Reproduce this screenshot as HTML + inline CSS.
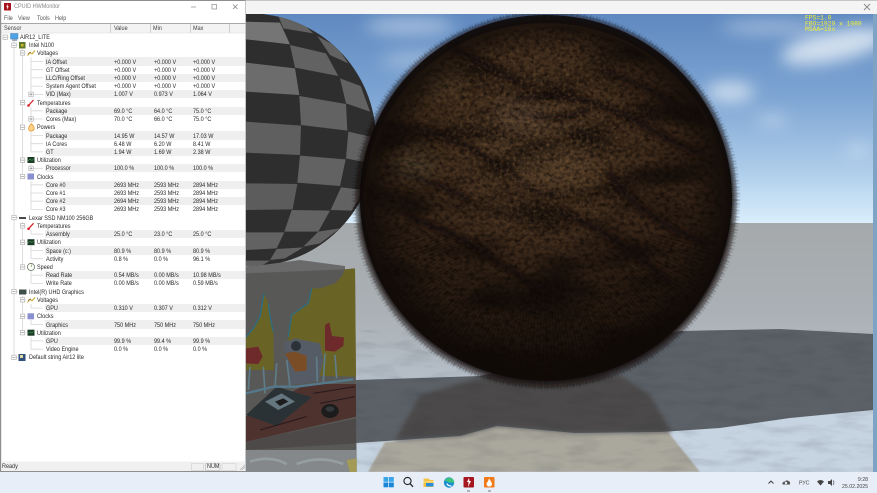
<!DOCTYPE html>
<html><head><meta charset="utf-8"><style>
html,body{margin:0;padding:0;width:877px;height:493px;overflow:hidden;background:#7fa3c4}
body{position:relative;font-family:"Liberation Sans",sans-serif}
svg{position:absolute;left:0;top:0}
#win{position:absolute;left:0;top:0;width:246px;height:472px;background:#fff;filter:blur(.22px);overflow:hidden;color:#2a2a2a;font-size:6.1px}
#win .a{position:absolute;white-space:nowrap}
#win .t{transform:scaleX(.9);transform-origin:0 50%}
#rows{position:absolute;left:0;top:32.69px;width:245px}
.r{position:relative;height:8.22px;line-height:8.22px;white-space:nowrap}
.z:before{content:"";position:absolute;left:45px;right:0;top:0;height:8.22px;background:#efefef}
.r b,.r i,.r u,.r s{position:absolute;font-weight:normal;font-style:normal;text-decoration:none;top:1.2px;transform:scaleX(.9);transform-origin:0 50%}
.l0{left:20px}.l1{left:28.5px}.l2{left:37px}.l3{left:45.7px}
.r i{left:114px}.r u{left:153.6px}.r s{left:193.4px}
#tb{position:absolute;left:0;top:472px;width:877px;height:21px;background:#e7eef8}
</style></head><body>
<svg width="877" height="493" viewBox="0 0 877 493">
<defs>
<linearGradient id="sky" x1="0" y1="0" x2="0" y2="1"><stop offset="0" stop-color="#5f89c0"/><stop offset=".4" stop-color="#7ea5d3"/><stop offset=".75" stop-color="#aecdea"/><stop offset="1" stop-color="#daeefc"/></linearGradient>
<linearGradient id="fl" x1="0" y1="0" x2="0" y2="1"><stop offset="0" stop-color="#a5a9ab"/><stop offset=".35" stop-color="#aab0b5"/><stop offset=".7" stop-color="#b8c2cd"/><stop offset="1" stop-color="#c9d5e2"/></linearGradient>
<radialGradient id="furg" gradientUnits="userSpaceOnUse" cx="535" cy="140" r="260"><stop offset="0" stop-color="#4c3826"/><stop offset=".3" stop-color="#402d1d"/><stop offset=".6" stop-color="#342317"/><stop offset=".85" stop-color="#261910"/><stop offset="1" stop-color="#170f09"/></radialGradient>
<radialGradient id="edge" gradientUnits="userSpaceOnUse" cx="546" cy="198" r="186"><stop offset="0" stop-color="#0e0906" stop-opacity="0"/><stop offset=".78" stop-color="#0e0906" stop-opacity="0"/><stop offset=".92" stop-color="#0e0906" stop-opacity=".55"/><stop offset="1" stop-color="#0e0906" stop-opacity=".92"/></radialGradient>
<linearGradient id="low" gradientUnits="userSpaceOnUse" x1="0" y1="230" x2="0" y2="385"><stop offset="0" stop-color="#0c0805" stop-opacity="0"/><stop offset="1" stop-color="#0c0805" stop-opacity=".5"/></linearGradient>
<radialGradient id="fadeg" gradientUnits="userSpaceOnUse" cx="535" cy="135" r="140"><stop offset="0" stop-color="#fff"/><stop offset=".6" stop-color="#aaa"/><stop offset="1" stop-color="#000"/></radialGradient>
<mask id="fade" maskUnits="userSpaceOnUse" x="340" y="0" width="420" height="400"><rect x="340" y="0" width="420" height="400" fill="url(#fadeg)"/></mask>
<clipPath id="lowclip"><rect x="340" y="235" width="420" height="170"/></clipPath>
<filter id="b2" x="-50%" y="-50%" width="200%" height="200%"><feGaussianBlur stdDeviation="2.5"/></filter>
<filter id="b8" x="-50%" y="-50%" width="200%" height="200%"><feGaussianBlur stdDeviation="8"/></filter>
<filter id="b1"><feGaussianBlur stdDeviation=".7"/></filter>
<filter id="b05" x="-5%" y="-5%" width="110%" height="110%"><feGaussianBlur stdDeviation=".5"/></filter>
<filter id="noise" x="0" y="0" width="100%" height="100%" color-interpolation-filters="sRGB"><feTurbulence type="fractalNoise" baseFrequency=".2 .26" numOctaves="2" seed="7"/><feColorMatrix values="0 0 0 0 .05 0 0 0 0 .03 0 0 0 0 .02 2.4 0 0 0 -.95"/><feComposite in2="SourceAlpha" operator="in"/><feGaussianBlur stdDeviation=".35"/></filter>
<filter id="noiseL" x="0" y="0" width="100%" height="100%" color-interpolation-filters="sRGB"><feTurbulence type="fractalNoise" baseFrequency=".3" numOctaves="2" seed="19"/><feColorMatrix values="0 0 0 0 .5 0 0 0 0 .37 0 0 0 0 .23 2.6 0 0 0 -1.2"/><feComposite in2="SourceAlpha" operator="in"/><feGaussianBlur stdDeviation=".35"/></filter>
<filter id="blot" x="0" y="0" width="100%" height="100%" color-interpolation-filters="sRGB"><feTurbulence type="fractalNoise" baseFrequency=".012 .032" numOctaves="2" seed="11"/><feColorMatrix values="0 0 0 0 .06 0 0 0 0 .04 0 0 0 0 .03 3.2 0 0 0 -1.35"/><feComposite in2="SourceAlpha" operator="in"/></filter>
<filter id="marb" x="0" y="0" width="100%" height="100%" color-interpolation-filters="sRGB"><feTurbulence type="fractalNoise" baseFrequency=".03 .12" numOctaves="3" seed="3"/><feColorMatrix values="0 0 0 0 .15 0 0 0 0 .17 0 0 0 0 .2 1.4 0 0 0 -.62"/><feComposite in2="SourceAlpha" operator="in"/></filter>
<clipPath id="chk"><circle cx="28" cy="420" r="380"/></clipPath>
</defs>

<rect x="246" y="14" width="627" height="209" fill="url(#sky)"/>
<rect x="246" y="223" width="627" height="249" fill="url(#fl)"/>
<g fill="#e4edf6" filter="url(#b8)">
<ellipse cx="410" cy="26" rx="45" ry="8" opacity=".55"/><ellipse cx="770" cy="27" rx="50" ry="7" opacity=".45"/>
<ellipse cx="835" cy="46" rx="55" ry="15" opacity=".85" transform="rotate(-12 835 46)"/>
<ellipse cx="730" cy="92" rx="24" ry="10" opacity=".75"/><ellipse cx="772" cy="120" rx="16" ry="4" opacity=".65"/><ellipse cx="858" cy="150" rx="12" ry="5" opacity=".6"/>
<ellipse cx="420" cy="60" rx="40" ry="9" opacity=".35"/>
</g>

<!-- floor plate and marble -->
<polygon points="356,472 356,445 460,436 497,426 575,433 660,432 720,428 790,418 873,410 873,472" fill="#c6d3e0"/>
<polygon points="368,472 385,442 460,436 497,426 575,433 668,432 700,472" fill="#aaa89d" filter="url(#b1)"/>
<polygon points="356,380 480,376 680,331 780,329 873,334 873,410 790,418 720,428 660,432 575,433 520,428 497,426 460,436 356,443" fill="#5b6167"/>
<polygon points="395,440 420,395 490,375 620,375 650,395 672,432 575,433 497,426 460,436" fill="#4b4a48" filter="url(#b2)"/>
<rect x="356" y="330" width="517" height="142" fill="#fff" filter="url(#marb)" opacity=".2"/>

<!-- checker sphere -->
<g transform="translate(240 0) scale(.33333)" filter="url(#b05)">
<circle cx="28" cy="420" r="380" fill="#2f2f2f"/>
<g clip-path="url(#chk)" fill="#626262">
<polygon points="18,65 120,68 150,133 18,118" fill="#747474"/>
<polygon points="112,40 175,58 220,100 130,85"/>
<polygon points="150,135 258,160 295,228 165,203"/>
<polygon points="232,108 290,140 325,190 270,165"/>
<polygon points="18,188 165,205 178,285 18,275" fill="#6c6c6c"/>
<polygon points="300,235 362,258 390,335 318,310"/>
<polygon points="18,365 183,377 180,465 18,458" fill="#5e5e5e"/>
<polygon points="178,288 318,312 322,392 183,375"/>
<polygon points="325,395 400,412 392,490 318,475"/>
<polygon points="180,467 317,478 300,558 172,548"/>
<polygon points="18,550 172,552 158,628 18,630" fill="#5c5c5c"/>
<polygon points="303,562 372,570 335,632 272,630"/>
<polygon points="155,630 270,632 235,695 133,695"/>
<polygon points="18,697 133,697 110,745 18,750"/>
<polygon points="235,695 300,685 240,730 190,740"/>
<polygon points="110,747 190,742 135,775 90,780"/>
<polygon points="18,782 90,782 60,800 18,800"/>
</g>
</g>

<!-- cube top -->
<polygon points="240,268 300,260 345,266 345,272 240,274" fill="#6a6a6a"/>
<!-- cube face art -->
<g transform="translate(240 260) scale(.33333)" filter="url(#b05)">
<polygon points="18,40 315,28 345,25 350,640 18,640" fill="#585856"/>
<polygon points="345,25 315,28 305,50 285,70 240,85 215,85 205,130 155,165 145,230 150,345 348,350" fill="#6a6426"/>
<polygon points="18,232 40,205 60,170 72,100 85,130 90,170 100,210 102,330 18,330" fill="#6a6426"/>
<path d="M215 85 L205 130 155 165 145 230 M72 100 L60 170 40 205 18 232 M85 130 L90 170 100 215" stroke="#2f6d7f" stroke-width="4" fill="none"/>
<polygon points="130,250 165,235 240,250 250,300 235,365 150,375" fill="#565c66"/>
<polygon points="135,280 165,275 200,288 200,332 165,335" fill="#7a4d28"/>
<circle cx="168" cy="258" r="15" fill="#2b3338"/>
<polygon points="255,195 268,187 276,228 312,232 310,258 285,275 255,272" fill="#6e2a2a"/>
<polygon points="18,265 55,260 68,290 55,312 18,310" fill="#6e2a2a"/>
<path d="M255 280 L250 365 M285 285 L290 355 M140 300 L150 380 M70 320 L75 400 M30 320 L25 390 M110 310 L105 385 M230 290 L232 365" stroke="#5f7c88" stroke-width="5" fill="none"/>
<polygon points="18,470 200,372 348,372 348,470 18,545" fill="#4e302f"/>
<polygon points="18,465 110,380 215,412 110,498" fill="#2a3236"/>
<polygon points="75,425 125,400 165,425 115,450" fill="#65767e"/>
<polygon points="105,425 130,415 145,425 120,438" fill="#1a1d1f"/>
<path d="M18 400 L100 380 170 380 340 358" stroke="#55788a" stroke-width="7" fill="none"/>
<path d="M220 400 L345 380 M240 430 L345 410 M60 510 L200 470" stroke="#251a1a" stroke-width="3" fill="none"/>
<ellipse cx="270" cy="453" rx="26" ry="21" fill="#1c1e1f"/><ellipse cx="270" cy="447" rx="13" ry="8" fill="#34373a"/>
<polygon points="18,545 348,475 348,550 18,570" fill="#4e4a48"/>
<rect x="18" y="570" width="332" height="70" fill="#85888a"/>
<path d="M30 605 Q90 585 140 612 M170 612 Q240 585 310 612" stroke="#959fa0" stroke-width="8" fill="none"/>
<polygon points="320,600 350,595 350,640 330,640" fill="#a39a55"/>
</g>

<!-- fur -->
<ellipse cx="546" cy="200" rx="188" ry="184" fill="#130d09" opacity=".95" filter="url(#b2)"/>
<ellipse cx="546" cy="201" rx="182" ry="178" fill="url(#furg)"/>
<ellipse cx="546" cy="201" rx="180" ry="176" fill="#000" filter="url(#blot)" opacity=".7"/>
<g filter="url(#b2)" fill="none" stroke="#120c08" stroke-width="7" opacity=".85">
<path d="M383 125 Q440 125 500 167 T553 190"/>
<path d="M407 217 Q450 230 480 250 T547 293"/>
<path d="M513 100 Q573 85 640 123 T700 150"/>
<path d="M450 47 Q483 62 527 87"/>
<path d="M607 170 Q640 220 707 243"/>
<path d="M557 210 Q620 235 673 287"/>
<path d="M510 110 Q550 125 590 110"/>
<path d="M390 170 Q430 180 470 200"/>
<path d="M600 70 Q650 85 680 110"/>
</g>
<g filter="url(#b8)">
<ellipse cx="520" cy="115" rx="24" ry="14" fill="#66503a" opacity=".6"/>
<ellipse cx="555" cy="170" rx="44" ry="20" fill="#5a432c" opacity=".65"/>
<ellipse cx="415" cy="165" rx="24" ry="16" fill="#4a3c26" opacity=".7"/>
<ellipse cx="440" cy="85" rx="24" ry="16" fill="#4e3a26" opacity=".6"/>
</g>
<ellipse cx="546" cy="201" rx="176" ry="174" fill="#000" filter="url(#noise)" opacity=".7"/>
<g mask="url(#fade)"><ellipse cx="546" cy="160" rx="150" ry="130" fill="#000" filter="url(#noiseL)" opacity=".55"/></g>
<ellipse cx="546" cy="200" rx="184" ry="180" fill="url(#low)"/>
<g clip-path="url(#lowclip)"><circle cx="546" cy="205" r="125" fill="none" stroke="#050302" stroke-width="100" stroke-dasharray="1 2.1 .7 2.7" opacity=".22"/></g>
<ellipse cx="546" cy="198" rx="186" ry="183" fill="url(#edge)"/>
<g filter="url(#b05)" fill="none" stroke="#110c08">
<ellipse cx="546" cy="200" rx="188" ry="185" stroke-width="6" stroke-dasharray="1.1 1.1" opacity=".55"/>
<ellipse cx="546" cy="200" rx="192" ry="188" stroke-width="4" stroke-dasharray=".8 2.6 1.2 1.9" opacity=".3"/>
</g>

<!-- 3D window titlebar -->
<rect x="246" y="0" width="631" height="14" fill="#f4f4f4"/>
<rect x="246" y="0" width="631" height="1" fill="#c4c6c8"/>
<path d="M864 4 L870 10 M870 4 L864 10" stroke="#8b8b8b" stroke-width="1"/>
<rect x="873" y="14" width="4" height="458" fill="#7fa3c4"/>
<text font-family="'Liberation Mono',monospace" font-size="6.3" fill="#eef03a"><tspan x="805" y="19.5">FPS=1.0</tspan><tspan x="805" y="25.3">FBO=1920 x 1080</tspan><tspan x="805" y="31">MSAA=16x</tspan></text>
</svg>

<div id="win">
<div style="position:absolute;left:0;top:0;width:246px;height:1px;background:#8e8e8e"></div>
<div class="a t" style="left:14px;top:3px;line-height:8px;color:#8a8a8a">CPUID HWMonitor</div>
<div class="a t" style="left:4px;top:15px;line-height:8px;color:#555">File</div>
<div class="a t" style="left:18.3px;top:15px;line-height:8px;color:#555">View</div>
<div class="a t" style="left:36.7px;top:15px;line-height:8px;color:#555">Tools</div>
<div class="a t" style="left:55px;top:15px;line-height:8px;color:#555">Help</div>
<div class="a" style="left:0;top:23px;width:246px;height:1px;background:#a8a8a8"></div>
<div class="a" style="left:0;top:24px;width:246px;height:9px;background:#f3f3f3"></div>
<div class="a t" style="left:4px;top:25px;line-height:8px;color:#444">Sensor</div>
<div class="a t" style="left:113.5px;top:25px;line-height:8px;color:#444">Value</div>
<div class="a t" style="left:153.3px;top:25px;line-height:8px;color:#444">Min</div>
<div class="a t" style="left:193px;top:25px;line-height:8px;color:#444">Max</div>
<div id="rows">
<div class="r"><b class="l0">AIR12_LITE</b></div>
<div class="r"><b class="l1">Intel N100</b></div>
<div class="r"><b class="l2">Voltages</b></div>
<div class="r z"><b class="l3">IA Offset</b><i>+0.000 V</i><u>+0.000 V</u><s>+0.000 V</s></div>
<div class="r"><b class="l3">GT Offset</b><i>+0.000 V</i><u>+0.000 V</u><s>+0.000 V</s></div>
<div class="r z"><b class="l3">LLC/Ring Offset</b><i>+0.000 V</i><u>+0.000 V</u><s>+0.000 V</s></div>
<div class="r"><b class="l3">System Agent Offset</b><i>+0.000 V</i><u>+0.000 V</u><s>+0.000 V</s></div>
<div class="r z"><b class="l3">VID (Max)</b><i>1.007 V</i><u>0.973 V</u><s>1.064 V</s></div>
<div class="r"><b class="l2">Temperatures</b></div>
<div class="r z"><b class="l3">Package</b><i>69.0 °C</i><u>64.0 °C</u><s>75.0 °C</s></div>
<div class="r"><b class="l3">Cores (Max)</b><i>70.0 °C</i><u>66.0 °C</u><s>75.0 °C</s></div>
<div class="r"><b class="l2">Powers</b></div>
<div class="r z"><b class="l3">Package</b><i>14.95 W</i><u>14.57 W</u><s>17.03 W</s></div>
<div class="r"><b class="l3">IA Cores</b><i>6.48 W</i><u>6.20 W</u><s>8.41 W</s></div>
<div class="r z"><b class="l3">GT</b><i>1.94 W</i><u>1.69 W</u><s>2.38 W</s></div>
<div class="r"><b class="l2">Utilization</b></div>
<div class="r z"><b class="l3">Processor</b><i>100.0 %</i><u>100.0 %</u><s>100.0 %</s></div>
<div class="r"><b class="l2">Clocks</b></div>
<div class="r z"><b class="l3">Core #0</b><i>2693 MHz</i><u>2593 MHz</u><s>2894 MHz</s></div>
<div class="r"><b class="l3">Core #1</b><i>2693 MHz</i><u>2593 MHz</u><s>2894 MHz</s></div>
<div class="r z"><b class="l3">Core #2</b><i>2694 MHz</i><u>2593 MHz</u><s>2894 MHz</s></div>
<div class="r"><b class="l3">Core #3</b><i>2693 MHz</i><u>2593 MHz</u><s>2894 MHz</s></div>
<div class="r"><b class="l1">Lexar SSD NM100 256GB</b></div>
<div class="r"><b class="l2">Temperatures</b></div>
<div class="r z"><b class="l3">Assembly</b><i>25.0 °C</i><u>23.0 °C</u><s>25.0 °C</s></div>
<div class="r"><b class="l2">Utilization</b></div>
<div class="r z"><b class="l3">Space (c:)</b><i>80.9 %</i><u>80.9 %</u><s>80.9 %</s></div>
<div class="r"><b class="l3">Activity</b><i>0.8 %</i><u>0.0 %</u><s>96.1 %</s></div>
<div class="r"><b class="l2">Speed</b></div>
<div class="r z"><b class="l3">Read Rate</b><i>0.54 MB/s</i><u>0.00 MB/s</u><s>10.98 MB/s</s></div>
<div class="r"><b class="l3">Write Rate</b><i>0.00 MB/s</i><u>0.00 MB/s</u><s>0.59 MB/s</s></div>
<div class="r"><b class="l1">Intel(R) UHD Graphics</b></div>
<div class="r"><b class="l2">Voltages</b></div>
<div class="r z"><b class="l3">GPU</b><i>0.310 V</i><u>0.307 V</u><s>0.312 V</s></div>
<div class="r"><b class="l2">Clocks</b></div>
<div class="r z"><b class="l3">Graphics</b><i>750 MHz</i><u>750 MHz</u><s>750 MHz</s></div>
<div class="r"><b class="l2">Utilization</b></div>
<div class="r z"><b class="l3">GPU</b><i>99.9 %</i><u>99.4 %</u><s>99.9 %</s></div>
<div class="r"><b class="l3">Video Engine</b><i>0.0 %</i><u>0.0 %</u><s>0.0 %</s></div>
<div class="r"><b class="l1">Default string Air12 lite</b></div>
</div>
<svg width="246" height="472" viewBox="0 0 246 472">
<!-- titlebar -->
<rect x="4" y="3" width="7" height="7.5" fill="#a8141c"/><path d="M7.5 4 L6.3 7 H7.2 L7 9.8 L8.8 6.4 H7.8 Z" fill="#fff"/>
<path d="M191 7H196" stroke="#999" stroke-width=".8"/><rect x="212" y="4.5" width="4.5" height="4.5" fill="none" stroke="#999" stroke-width=".8"/><path d="M233 4.5L237.5 9M237.5 4.5L233 9" stroke="#888" stroke-width=".8"/>
<!-- column separators -->
<path d="M110.5 24V33M150.5 24V33M190.5 24V33M229.5 24V33" stroke="#c8c8c8" stroke-width=".8"/>
<path d="M0 33H246" stroke="#dcdcdc" stroke-width=".6"/>
<!-- tree lines -->
<path d="M5 40V37H9 M14 40V357.4M14 45H18M14 217.6H18M14 291.6H18M14 357.4H18
M22.5 49V176.5M22.5 53H26M22.5 102.6H26M22.5 127.2H26M22.5 160.1H26M22.5 176.5H26
M22.5 222V267M22.5 225.9H26M22.5 242.3H26M22.5 267H26
M22.5 296V332.7M22.5 299.8H26M22.5 316.3H26M22.5 332.7H26
M31 57V94.3M31 61.5H43M31 69.7H43M31 77.9H43M31 86.1H43M31 94.3H43
M31 107V119M31 110.8H43M31 119H43
M31 131V151.9M31 135.4H43M31 143.7H43M31 151.9H43
M31 164V168.3M31 168.3H43
M31 181V209.4M31 184.8H43M31 193H43M31 201.2H43M31 209.4H43
M31 230V234.1M31 234.1H43
M31 246V258.7M31 250.5H43M31 258.7H43
M31 271V283.4M31 275.2H43M31 283.4H43
M31 304V308.1M31 308.1H43
M31 320V324.5M31 324.5H43
M31 337V349.2M31 340.9H43M31 349.2H43" stroke="#d6d6d6" stroke-width=".8" fill="none"/>
<!-- expander boxes -->
<g fill="#fff" stroke="#a8a8a8" stroke-width=".6">
<rect x="3" y="35" width="4.4" height="4.4"/><rect x="11.8" y="43" width="4.4" height="4.4"/><rect x="11.8" y="215.4" width="4.4" height="4.4"/><rect x="11.8" y="289.4" width="4.4" height="4.4"/><rect x="11.8" y="355.2" width="4.4" height="4.4"/>
<rect x="20.3" y="50.8" width="4.4" height="4.4"/><rect x="20.3" y="100.4" width="4.4" height="4.4"/><rect x="20.3" y="125" width="4.4" height="4.4"/><rect x="20.3" y="157.9" width="4.4" height="4.4"/><rect x="20.3" y="174.3" width="4.4" height="4.4"/><rect x="20.3" y="223.7" width="4.4" height="4.4"/><rect x="20.3" y="240.1" width="4.4" height="4.4"/><rect x="20.3" y="264.8" width="4.4" height="4.4"/><rect x="20.3" y="297.6" width="4.4" height="4.4"/><rect x="20.3" y="314.1" width="4.4" height="4.4"/><rect x="20.3" y="330.5" width="4.4" height="4.4"/>
<rect x="28.8" y="92.1" width="4.4" height="4.4"/><rect x="28.8" y="116.8" width="4.4" height="4.4"/><rect x="28.8" y="166.1" width="4.4" height="4.4"/>
</g>
<path d="M3.8 37.2H6.6M12.6 45.2H15.4M12.6 217.6H15.4M12.6 291.6H15.4M12.6 357.4H15.4M21.1 53H23.9M21.1 102.6H23.9M21.1 127.2H23.9M21.1 160.1H23.9M21.1 176.5H23.9M21.1 225.9H23.9M21.1 242.3H23.9M21.1 267H23.9M21.1 299.8H23.9M21.1 316.3H23.9M21.1 332.7H23.9M29.6 94.3H32.4M31 93V95.6M29.6 119H32.4M31 117.6V120.4M29.6 168.3H32.4M31 167V169.6" stroke="#666" stroke-width=".5"/>
<!-- icons: computer -->
<rect x="10.5" y="33.5" width="7.5" height="5.5" fill="#4da3e6" stroke="#4a7fae" stroke-width=".5"/><rect x="12" y="39.5" width="5" height="1.2" fill="#7a8a99"/>
<!-- cpu -->
<rect x="19" y="42" width="6.5" height="6.5" fill="#5c7a28"/><rect x="21" y="44" width="2.5" height="2.5" fill="#d8b830"/>
<!-- voltage icons -->
<path d="M27.5 55.5L30 52.5L32 54L35 50.5" stroke="#c9a227" stroke-width="1" fill="none"/><path d="M28 53.5L31 52" stroke="#6a5a2a" stroke-width=".6"/>
<path d="M27.5 302.3L30 299.3L32 300.8L35 297.3" stroke="#c9a227" stroke-width="1" fill="none"/><path d="M28 300.3L31 298.8" stroke="#6a5a2a" stroke-width=".6"/>
<!-- temperature icons -->
<g stroke="#d8232a" stroke-width="1.3" fill="none"><path d="M28.5 105.5L33.5 100"/><path d="M28.5 228.8L33.5 223.3"/></g>
<circle cx="28.5" cy="105.5" r="1.3" fill="#d8232a"/><circle cx="28.5" cy="228.8" r="1.3" fill="#d8232a"/>
<!-- power icon -->
<path d="M31.5 123.5Q35 127 34 129.5Q33 131 31 131Q28.5 131 28.5 128.5Q29 126 31.5 123.5Z" fill="#fbd28a" stroke="#e8952a" stroke-width=".7"/>
<!-- utilization -->
<g fill="#1b3a26"><rect x="27.5" y="157" width="7" height="6"/><rect x="27.5" y="239.2" width="7" height="6"/><rect x="27.5" y="329.7" width="7" height="6"/></g>
<path d="M28 161L30 159L32 160.5L34 158.5M28 243.2L30 241.2L32 242.7L34 240.7M28 333.7L30 331.7L32 333.2L34 331.2" stroke="#5fd06f" stroke-width=".5" fill="none"/>
<!-- clocks -->
<g fill="#8a8fd0"><rect x="27.5" y="173.5" width="6.5" height="6"/><rect x="27.5" y="313.3" width="6.5" height="6"/></g>
<!-- speed -->
<circle cx="31" cy="267" r="3.6" fill="#fff" stroke="#5a6a50" stroke-width=".7"/><path d="M31 267L32 264.5" stroke="#6a9a3a" stroke-width=".7"/>
<!-- ssd -->
<rect x="19" y="217" width="7" height="2" fill="#4a4a4a"/>
<!-- gpu -->
<rect x="19" y="289.5" width="7.5" height="4.5" fill="#3f5048"/><rect x="19" y="294" width="7" height=".8" fill="#889"/>
<!-- motherboard -->
<rect x="18.5" y="354" width="7" height="7" fill="#2f4f7f"/><rect x="20" y="355" width="3" height="3" fill="#e0d9a0"/>
<!-- borders -->
<rect x="0" y="0" width="1.2" height="472" fill="#8e8e8e"/>
<rect x="245.2" y="0" width="1" height="472" fill="#b8b8b8"/>
<!-- status -->
<rect x="1.2" y="461.5" width="244" height="9.5" fill="#f0f0f0"/>
<rect x="191.5" y="463.5" width="12" height="7" fill="none" stroke="#cfcfcf" stroke-width=".6"/>
<rect x="205.5" y="463.5" width="14.5" height="7" fill="none" stroke="#b5b5b5" stroke-width=".6"/>
<rect x="222" y="463.5" width="14" height="7" fill="none" stroke="#cfcfcf" stroke-width=".6"/>
<path d="M240 470L245 465M242 470L245 467" stroke="#aaa" stroke-width=".6"/>
<rect x="0" y="471" width="246" height="1" fill="#8e8e8e"/>
</svg>
<div class="a t" style="left:2px;top:463.2px;line-height:8px;color:#333">Ready</div>
<div class="a t" style="left:206.8px;top:463.2px;line-height:8px;color:#333">NUM</div>
</div>

<div id="tb">
<svg width="877" height="21" viewBox="0 472 877 21">
<g fill="#1a86d8"><rect x="383.5" y="477" width="4.8" height="4.8" fill="#39a6ea"/><rect x="389" y="477" width="4.8" height="4.8" fill="#39a6ea"/><rect x="383.5" y="482.5" width="4.8" height="4.8"/><rect x="389" y="482.5" width="4.8" height="4.8"/></g>
<circle cx="407.5" cy="481" r="3.6" fill="none" stroke="#222" stroke-width="1.1"/><path d="M410 483.6L413 486.8" stroke="#222" stroke-width="1.3"/>
<path d="M423.5 478.5H428.5L430 480H433.5V487H423.5Z" fill="#f6c243"/><rect x="426" y="483" width="7.5" height="3.5" fill="#2a8fd8"/><rect x="423.5" y="481" width="10" height="1.5" fill="#f9d877"/>
<circle cx="449" cy="482.5" r="5.2" fill="#1b8fd0"/><path d="M444.5 481Q447 477 451 478Q454 479 454.2 482.5H449Q446 480.5 444.5 481Z" fill="#3fc47c"/><path d="M447 483.5Q447.5 486 451.5 486" stroke="#fff" stroke-width="1.2" fill="none"/>
<rect x="463.5" y="477" width="10.5" height="10.5" rx="1" fill="#a61620"/><path d="M469 478L467 482H468.6L468 487L471 481H469.4Z" fill="#fff"/>
<rect x="484" y="477" width="10.5" height="10.5" rx="1" fill="#f07a1a"/><path d="M489 478.5Q491 481 492 483.5Q492 486.5 489.2 486.5Q486.5 486.5 486.5 483.5Q487 482 488 481.5Q488.5 480 489 478.5Z" fill="#fff"/>
<rect x="467" y="490.5" width="3" height="1" fill="#777"/><rect x="488" y="490.5" width="3" height="1" fill="#777"/>
<path d="M768.5 483.5L771 481L773.5 483.5" stroke="#333" stroke-width=".9" fill="none"/>
<path d="M782.5 484.5Q782 481.5 785 481.5Q786.5 479.5 788.5 481Q790.5 481.5 790 484.5Z" fill="#555"/><circle cx="786" cy="483" r="1.2" fill="#e7eef8"/>
<path d="M817 481.5Q820.5 478.5 824 481.5L820.5 485.5Z" fill="#444"/>
<path d="M828 481H830L832 479V486L830 484H828Z" fill="#444"/><path d="M833 480.5Q835 482.5 833 485" stroke="#444" stroke-width=".6" fill="none"/>
<g font-family="'Liberation Sans',sans-serif" fill="#444" font-size="5.2"><text x="799" y="484.6">РУС</text><text x="868" y="481" text-anchor="end">9:28</text><text x="868" y="488" text-anchor="end">25.02.2025</text></g>
</svg>
</div>
</body></html>
